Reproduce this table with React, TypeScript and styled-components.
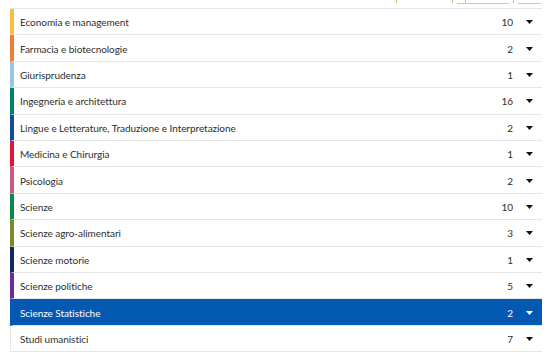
import styled, { createGlobalStyle } from 'styled-components';

type Area = {
  name: string;
  count: number;
  color?: string;
};

const AREAS: Area[] = [
  { name: 'Economia e management', count: 10, color: '#f7c043' },
  { name: 'Farmacia e biotecnologie', count: 2, color: '#f47a35' },
  { name: 'Giurisprudenza', count: 1, color: '#9dc4e8' },
  { name: 'Ingegneria e architettura', count: 16, color: '#00826d' },
  { name: 'Lingue e Letterature, Traduzione e Interpretazione', count: 2, color: '#17489a' },
  { name: 'Medicina e Chirurgia', count: 1, color: '#e1143b' },
  { name: 'Psicologia', count: 2, color: '#c95a80' },
  { name: 'Scienze', count: 10, color: '#0a8a48' },
  { name: 'Scienze agro-alimentari', count: 3, color: '#7b8a2c' },
  { name: 'Scienze motorie', count: 1, color: '#14295b' },
  { name: 'Scienze politiche', count: 5, color: '#6f2a97' },
  { name: 'Scienze Statistiche', count: 2, color: '#0358b2' },
  { name: 'Studi umanistici', count: 7 },
];

const SELECTED = 'Scienze Statistiche';

const GlobalStyle = createGlobalStyle`
  html, body {
    margin: 0;
    padding: 0;
    background: #ffffff;
  }
  body {
    font-family: Lato, 'Open Sans', Arial, sans-serif;
  }
`;

const Caret = ({ color }: { color: string }) => (
  <svg width="7" height="4" viewBox="0 0 7 4">
    <path d="M0 0 H7 L3.5 4 Z" fill={color} />
  </svg>
);

const App = () => (
  <>
    <GlobalStyle />
    <Page>
      {/* bottom edge of the pager above, cut off by the frame */}
      <Toolbar>
        <Tick />
        <Spacer />
        <Tick />
        <PageInput $width={52}>
          <Tick />
        </PageInput>
        <Tick />
        <PageInput $width={23} />
      </Toolbar>
      <List>
        {AREAS.map((a) => {
          const active = a.name === SELECTED;
          return (
            <Row key={a.name} $color={a.color} $active={active}>
              <Name>{a.name}</Name>
              <Count>{a.count}</Count>
              <CaretBox>
                <Caret color={active ? '#ffffff' : '#111111'} />
              </CaretBox>
            </Row>
          );
        })}
      </List>
    </Page>
  </>
);

const Page = styled.div`
  width: 553px;
  height: 361px;
  overflow: hidden;
`;

const Toolbar = styled.div`
  display: flex;
  justify-content: flex-end;
  align-items: flex-start;
  gap: 4px;
  height: 8px;
  padding-right: 12px;
`;

const Spacer = styled.div`
  width: 47px;
`;

const Tick = styled.div`
  width: 1px;
  height: 3px;
  background: #d2b888;
`;

const PageInput = styled.div<{ $width: number }>`
  box-sizing: border-box;
  display: flex;
  padding-left: 8px;
  width: ${({ $width }) => $width}px;
  height: 4px;
  border-bottom: 1px solid #b8c6d8;
`;

const List = styled.div`
  margin: 0 11px 0 10px;
  border-top: 1px solid #e6e6e6;
`;

const Row = styled.div<{ $color?: string; $active: boolean }>`
  box-sizing: border-box;
  height: 26.42px;
  display: flex;
  align-items: center;
  padding: 1px 9px 0 ${({ $color }) => ($color ? '6px' : '9px')};
  border-left: ${({ $color }) => ($color ? '4px' : '1px')} solid
    ${({ $color }) => $color || '#e8e8e8'};
  border-bottom: 1px solid #e6e6e6;
  background: ${({ $active }) => ($active ? '#0358b2' : '#ffffff')};
  color: ${({ $active }) => ($active ? '#ffffff' : '#2e2e2e')};
`;

const Name = styled.span`
  flex: 1;
  font-size: 10px;
  letter-spacing: -0.05px;
  white-space: nowrap;
`;

const Count = styled.span`
  font-size: 10px;
  text-align: right;
`;

const CaretBox = styled.span`
  display: flex;
  align-items: center;
  margin-left: 13px;
`;

export default App;
